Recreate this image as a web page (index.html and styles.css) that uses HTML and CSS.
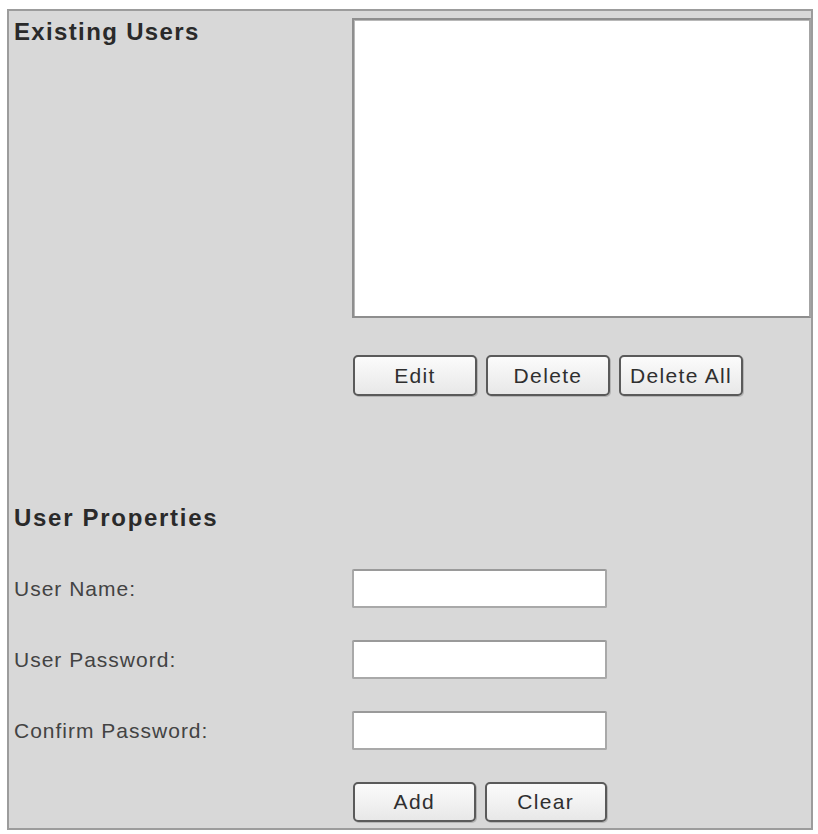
FILE: index.html
```html
<!DOCTYPE html>
<html>
<head>
<meta charset="utf-8">
<link rel="stylesheet" href="styles.css">
</head>
<body>
<div class="panel">
  <div class="existing">
    <h2 class="title">Existing Users</h2>
    <div class="listbox"></div>
    <div class="actions">
      <button class="btn">Edit</button>
      <button class="btn">Delete</button>
      <button class="btn">Delete All</button>
    </div>
  </div>
  <h2 class="title props-title">User Properties</h2>
  <div class="form">
    <label class="label">User Name:</label>
    <div class="field"></div>
    <label class="label">User Password:</label>
    <div class="field"></div>
    <label class="label">Confirm Password:</label>
    <div class="field"></div>
    <div class="actions form-actions">
      <button class="btn">Add</button>
      <button class="btn">Clear</button>
    </div>
  </div>
</div>
</body>
</html>
```

FILE: styles.css
```css
html, body {
  margin: 0;
  padding: 0;
  background: #ffffff;
}

body {
  font-family: "Liberation Sans", Arial, sans-serif;
}

.panel {
  box-sizing: border-box;
  width: 806px;
  margin: 9px 0 0 7px;
  padding: 0 0 6px 0;
  border: 2px solid #9c9c9c;
  background: #d8d8d8;
}

.existing {
  display: grid;
  grid-template-columns: 343px 1fr;
}

.title {
  margin: 8px 0 0 5px;
  font-size: 24px;
  line-height: 26px;
  font-weight: bold;
  color: #2a2a2a;
  letter-spacing: 1.35px;
}

.listbox {
  box-sizing: border-box;
  margin-top: 7px;
  height: 300px;
  background: #ffffff;
  border: 2px solid #8e8e8e;
  border-right-color: #a4a4a4;
  box-shadow: inset 1px 1px 0 #b8b8b8;
}

.actions {
  grid-column: 2;
  display: flex;
  gap: 9px;
  margin-top: 37px;
  padding-left: 1px;
}

.btn {
  box-sizing: border-box;
  width: 124px;
  height: 41px;
  padding: 0;
  border: 2px solid #5a5a5a;
  border-radius: 5px;
  background: linear-gradient(#fbfbfb, #e8e8e8);
  font-family: "Liberation Sans", Arial, sans-serif;
  font-size: 21px;
  letter-spacing: 1.35px;
  color: #2f2f2f;
  box-shadow: 1px 1px 0 #b4b4b4;
}

.props-title {
  margin-top: 109px;
  letter-spacing: 1.7px;
}

.form {
  display: grid;
  grid-template-columns: 343px 255px;
  row-gap: 32px;
  margin-top: 38px;
}

.label {
  align-self: center;
  padding-left: 5px;
  font-size: 21px;
  letter-spacing: 1px;
  color: #434343;
}

.field {
  box-sizing: border-box;
  height: 39px;
  background: #ffffff;
  border: 2px solid #a9a9a9;
  border-top-color: #9a9a9a;
  border-radius: 2px;
}

.form-actions {
  margin-top: 0;
}

.form-actions .btn {
  height: 40px;
}
```
